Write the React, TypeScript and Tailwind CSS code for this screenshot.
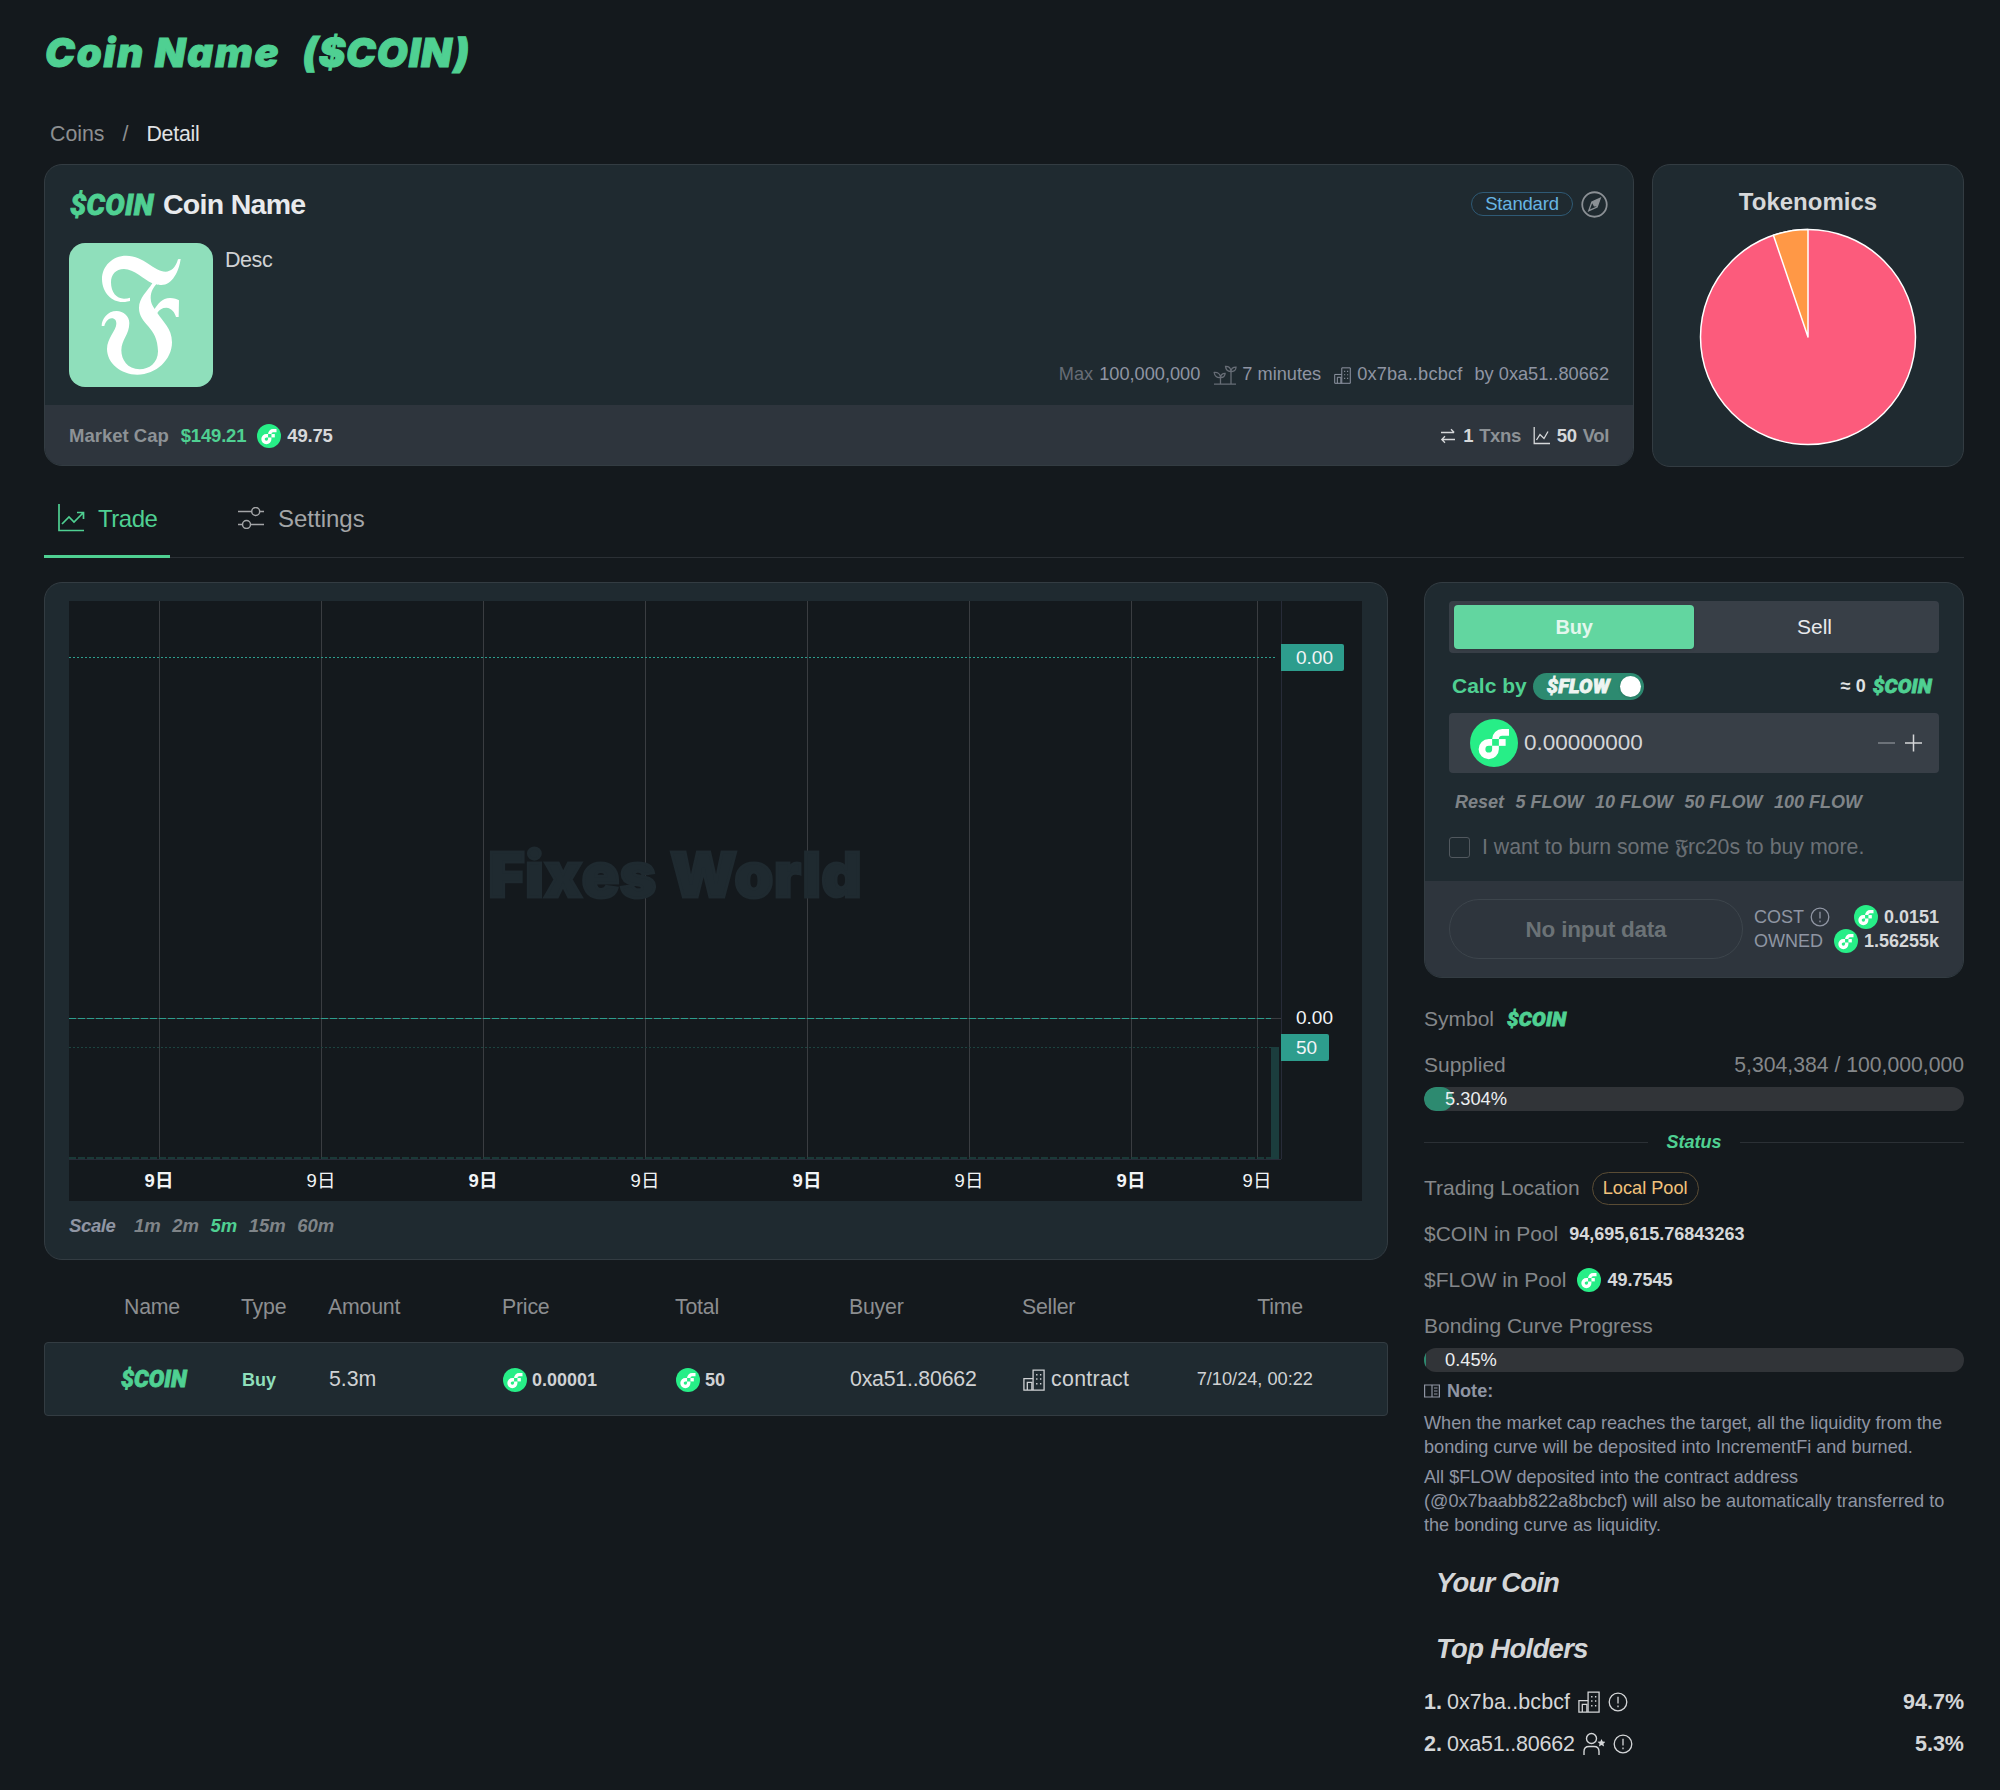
import React from "react";

const TITLE = "font-['Inter','Roboto',sans-serif] font-black italic [-webkit-text-stroke:1px_currentColor]";
const BRAND = "font-['Roboto','Inter',sans-serif] font-black italic [-webkit-text-stroke:0.8px_currentColor]";

function FlowIcon({ className = "size-6" }: { className?: string }) {
  return (
    <svg viewBox="0 0 101 101" className={`${className} shrink-0`}>
      <circle cx="50.5" cy="50.5" r="50.5" fill="#27ee87" />
      <g transform="translate(7 3) scale(.93)" fill="#fff">
        <rect x="57.8" y="42.2" width="15.3" height="15.3" />
        <path d="M42.55 65.1a7.64 7.64 0 1 1-7.64-7.65h7.64V42.2h-7.64A22.9 22.9 0 1 0 57.8 65.1v-7.65H42.55Z" />
        <path d="M65.45 34.55h15.28V19.27H65.45a22.93 22.93 0 0 0-22.9 22.9H57.8a7.64 7.64 0 0 1 7.65-7.62Z" />
      </g>
    </svg>
  );
}

function BuildingIcon({ className = "size-[22px]" }: { className?: string }) {
  return (
    <svg viewBox="0 0 24 24" className={`${className} shrink-0`} fill="none" stroke="currentColor" strokeWidth="1.4">
      <path d="M1 23V10.5H11V1.2H23V23Z" />
      <path d="M4.7 23v-8.5h5V23" />
      <path d="M11 10.5V23" />
      <path d="M14.3 6.2h1.5M18.5 6.2H20M14.3 11h1.5M18.5 11H20M14.3 16h1.5M18.5 16H20" strokeWidth="1.6" />
    </svg>
  );
}

function AlertIcon({ className = "size-5" }: { className?: string }) {
  return (
    <svg viewBox="0 0 20 20" className={`${className} shrink-0`} fill="none" stroke="currentColor" strokeWidth="1.3">
      <circle cx="10" cy="10" r="8.8" />
      <path d="M10 4.8v6.7M10 13.5v1.7" />
    </svg>
  );
}

function SproutIcon() {
  return (
    <svg viewBox="0 0 24 20" className="h-5 w-6 shrink-0" fill="none" stroke="currentColor" strokeWidth="1.3">
      <path d="M1 19.2h22M7.5 19v-6.5M18 19V7" />
      <path d="M7.5 12.5C4 13 1.5 11 1.2 7.5c3.5-.3 6 1.5 6.3 5ZM7.5 12.5c.2-2.6 1.8-4.2 4.6-4.2 0 2.8-1.6 4.4-4.6 4.2Z" />
      <path d="M18 6.5c-3.2.2-5.3-1.8-5.5-5.2 3.2-.2 5.4 1.7 5.5 5.2ZM18 6.5c.1-2.4 1.8-4.2 5-4.3 0 3-1.8 4.6-5 4.3Z" />
    </svg>
  );
}

function FrakturLogo() {
  return (
    <svg viewBox="0 0 432 432" className="size-36 shrink-0 rounded-2xl bg-[#8fdfbb]">
      <path
        fill="#fff"
        d="M335 48L327 49C320 75 305 86 290 86C255 86 225 38 172 38C130 38 99 70 99 108C99 150 130 177 160 177C172 177 180 175 183 174L183 164C178 166 172 167 165 167C142 167 126 148 126 118C126 95 140 78 165 78C195 78 225 110 250 121C235 145 210 165 210 195C210 245 267 250 267 325C267 360 240 379 212 379C175 379 157 350 157 322C157 290 181 275 181 240C181 220 163 204 143 204C115 204 98 228 98 249L106 249C108 240 116 226 128 226C138 226 142 233 142 242C142 262 114 285 114 318C114 360 155 395 205 395C262 395 309 350 309 298C309 255 280 235 265 210C270 200 280 194 292 194C308 194 318 210 321 222L329 222L330 172C325 168 315 165 303 165C280 165 265 185 257 198C250 188 245 180 245 165C245 145 255 132 262 124C268 126 272 126 277 126C310 126 330 85 335 48Z"
      />
    </svg>
  );
}

function HeaderCard() {
  return (
    <section className="flex h-[302px] w-[1590px] flex-col overflow-hidden rounded-[18px] border border-[#333c42] bg-[#1f2a30]">
      <div className="flex h-[240px] flex-col px-6 pt-[18px]">
        <div className="flex h-11 items-center">
          <span className={`${BRAND} w-[94px] pl-px pt-px text-[29px] tracking-[0.01em] text-[#4fd092]`}>$COIN</span>
          <h2 className="pb-px text-[28.5px] font-bold tracking-[-0.025em] text-[#e8eaed]">Coin Name</h2>
          <div className="mb-[3px] ml-auto mr-px flex items-center gap-2">
            <span className="flex h-6 w-[102px] items-center justify-center rounded-full border border-[#2f5a75] text-[18.5px] tracking-[-0.01em] text-[#68b5e3]">Standard</span>
            <svg viewBox="0 0 26 26" className="mt-px size-[27px] text-[#8b9095]" fill="none" stroke="currentColor" strokeWidth="1.7">
              <circle cx="13" cy="13" r="11.8" />
              <path d="M18.5 7l-3 8.500L7.500 19l3-8.500Z" strokeWidth="1.3" />
              <path d="M18.5 7l-8 3.500 5 5Z" fill="currentColor" stroke="none" />
              <path d="M10 10.500h3l2.500 4.500-3 0Z" fill="currentColor" stroke="none" />
            </svg>
          </div>
        </div>
        <div className="mt-[16px] flex gap-3">
          <FrakturLogo />
          <div className="flex flex-1 flex-col justify-between">
            <p className="pt-[1px] text-[21.5px] tracking-[-0.02em] text-[#d0d2d4]">Desc</p>
            <div className="flex h-6 items-center justify-end text-[18.2px] text-[#8f95a3]">
              <span className="text-[#676d76]">Max</span>
              <span className="ml-[6px] mr-[13px]">100,000,000</span>
              <span className="mr-[5px] text-[#676d76]"><SproutIcon /></span>
              <span className="mr-[13px]">7 minutes</span>
              <BuildingIcon className="mr-[6px] size-[17px]" />
              <span className="mr-3 tracking-[0.01em]">0x7ba..bcbcf</span>
              <span>by 0xa51..80662</span>
            </div>
          </div>
        </div>
      </div>
      <div className="flex flex-1 items-center bg-[#2e353d] px-6 pt-px text-[18.5px] font-bold text-[#d6d8da]">
        <span className="text-[#8d9296]">Market Cap</span>
        <span className="ml-3 tracking-[-0.01em] text-[#4fd092]">$149.21</span>
        <FlowIcon className="ml-[11px] size-6" />
        <span className="ml-[6px] tracking-[-0.01em]">49.75</span>
        <div className="ml-auto flex items-center tracking-[-0.02em]">
          <svg viewBox="0 0 16 16" className="mr-[7px] size-4" fill="none" stroke="currentColor" strokeWidth="1.3">
            <path d="M1 4.500h13M11 1.300l3.200 3.200M15 11.500H2M5 8.300l-3.200 3.200L5 14.700" />
          </svg>
          <span>1</span>
          <span className="ml-[6px] text-[#8d9296]">Txns</span>
          <svg viewBox="0 0 18 18" className="ml-3 mr-[6px] size-[18px]" fill="none" stroke="currentColor" strokeWidth="1.3">
            <path d="M1.200 0v16.500H17M3.500 13L7 7.500l4 4 4-7" />
          </svg>
          <span>50</span>
          <span className="ml-[6px] text-[#8d9296]">Vol</span>
        </div>
      </div>
    </section>
  );
}

function Tokenomics() {
  return (
    <section className="flex h-[303px] w-[312px] flex-col items-center rounded-[18px] border border-[#333c42] bg-[#1f2a30]">
      <h3 className="mt-[21px] text-2xl font-bold text-[#d6d8da]">Tokenomics</h3>
      <svg viewBox="-110 -110 220 220" className="mt-[9px] size-[220px]" stroke="#fff" strokeWidth="1.5" strokeLinejoin="round">
        <circle r="107.5" fill="#fc5b7c" />
        <path d="M0 0L-34.6 -101.8A107.5 107.5 0 0 1 0 -107.5Z" fill="#ff9846" />
      </svg>
    </section>
  );
}

const GRID = [90.5, 252.5, 414.5, 576.5, 738.5, 900.5, 1062.5, 1188.5];

function PriceChart() {
  return (
    <svg viewBox="0 0 1293 600" className="block h-[600px] w-[1293px] bg-[#14191d] font-['Liberation_Sans','Noto_Sans_CJK_SC',sans-serif]">
      {GRID.map((x) => (
        <path key={x} d={`M${x} 0V558`} stroke="#3a3d41" />
      ))}
      <text
        x="606"
        y="296"
        textAnchor="middle"
        fontSize="62"
        textLength="373"
        stroke="#1f2a30"
        strokeWidth="3"
        className="fill-[#1f2a30] font-['Inter','Roboto',sans-serif] font-black"
      >
        Fixes World
      </text>
      <path d="M0 56.5H1207" stroke="#2d9d8d" strokeDasharray="2 2" />
      <path d="M0 417.5H1212" stroke="#3a3d41" />
      <path d="M0 417.5H1202" stroke="#2d9d8d" strokeDasharray="7 2" />
      <path d="M0 446.5H1202" stroke="#1c4440" strokeDasharray="2 2" />
      <path d="M0 557H1202" stroke="#1c4440" strokeDasharray="7 2" strokeWidth="1.5" />
      <path d="M0 558.5H1212M1212.5 0V558" stroke="#272b38" />
      <rect x="1202" y="446" width="8" height="112" fill="#1b3d3d" />
      <path d="M1212 43h61q2 0 2 2v23q0 2-2 2h-61Z" fill="#2d9d8d" />
      <path d="M1212 433h46q2 0 2 2v23q0 2-2 2h-46Z" fill="#2d9d8d" />
      <g fill="#f2f4f6" fontSize="19">
        <text x="1227" y="63">0.00</text>
        <text x="1227" y="423">0.00</text>
        <text x="1227" y="453">50</text>
        {GRID.map((x, i) => (
          <text key={x} x={x - 0.5} y="586" textAnchor="middle" fontSize="18.5" fontWeight={i % 2 === 0 ? 700 : 400}>9日</text>
        ))}
      </g>
    </svg>
  );
}

function Trades() {
  const cols = "grid grid-cols-[121px_87px_174px_173px_174px_173px_1fr] items-center pl-[76px]";
  return (
    <div className="w-[1344px]">
      <div className={`${cols} h-[82px] pt-[14px] text-[21.3px] tracking-[-0.01em] text-[#8c8e90]`}>
        <span className="pl-[4px]">Name</span>
        <span>Type</span>
        <span>Amount</span>
        <span>Price</span>
        <span>Total</span>
        <span>Buyer</span>
        <span className="flex justify-between pr-[85px]">
          <span>Seller</span>
          <span>Time</span>
        </span>
      </div>
      <div className={`${cols} h-[74px] rounded border border-[#333c42] bg-[#1f2a30] pt-px text-[21.3px] text-[#d0d2d4]`}>
        <span className={`${BRAND} text-[23.2px] text-[#4fd092]`}>$COIN</span>
        <span className="text-lg font-bold text-[#8fdfbb]">Buy</span>
        <span>5.3m</span>
        <span className="flex items-center gap-[5px] text-lg font-bold"><FlowIcon />0.00001</span>
        <span className="flex items-center gap-[5px] text-lg font-bold"><FlowIcon />50</span>
        <span className="tracking-[-0.01em]">0xa51..80662</span>
        <span className="flex items-center justify-between pr-[74px]">
          <span className="flex items-center gap-[6px] tracking-[0.015em]"><BuildingIcon />contract</span>
          <span className="text-[18.2px]">7/10/24, 00:22</span>
        </span>
      </div>
    </div>
  );
}

function BuyPanel() {
  return (
    <section className="flex h-[396px] flex-col overflow-hidden rounded-[18px] border border-[#333c42] bg-[#1f2a30]">
      <div className="h-[298px] px-6 pt-[18px]">
        <div className="flex h-[52px] rounded bg-[#383f47] p-1 pl-[5px]">
          <div className="flex w-[240px] items-center justify-center rounded bg-[#62d6a0] text-xl font-bold tracking-[-0.01em] text-[#e3f7ed] shadow">Buy</div>
          <div className="flex flex-1 items-center justify-center text-[21px] text-[#e8eaed]">Sell</div>
        </div>
        <div className="mt-[19px] flex h-7 items-center pl-[3px] pr-[7px] text-[21px]">
          <span className="font-bold text-[#4fd092]">Calc by</span>
          <span className="ml-[6px] flex h-[27px] w-[111px] items-center justify-between rounded-full bg-[#2d8a70] pl-[14px] pr-[3px]">
            <span className={`${BRAND} text-xl tracking-[0.01em] text-[#eef5f2]`}>$FLOW</span>
            <span className="size-[21px] rounded-full bg-white shadow" />
          </span>
          <span className="ml-auto mr-[7px] text-lg font-bold text-[#e0e2e4]">≈ 0</span>
          <span className={`${BRAND} text-[20.5px] tracking-[0.01em] text-[#4fd092]`}>$COIN</span>
        </div>
        <div className="mt-[13px] flex h-[60px] items-center rounded bg-[#383f47] pl-[21px] pr-[17px] text-[22.5px] text-[#d4d6d8]">
          <FlowIcon className="mr-[6px] size-12" />
          <span>0.00000000</span>
          <svg viewBox="0 0 44 18" className="ml-auto h-[18px] w-11" fill="none" strokeWidth="1.5">
            <path d="M0 9h17" stroke="#7e848a" />
            <path d="M27 9h17M35.5 .5v17" stroke="#d4d6d8" />
          </svg>
        </div>
        <div className="mt-[15px] flex h-7 items-center gap-[11.5px] pl-[6px] text-lg font-bold italic text-[#7f8488]">
          <span>Reset</span>
          <span>5 FLOW</span>
          <span>10 FLOW</span>
          <span>50 FLOW</span>
          <span>100 FLOW</span>
        </div>
        <div className="mt-4 flex h-[30px] items-center text-[21.3px] text-[#6c7176]">
          <span className="mr-3 size-[21px] rounded-[3px] border border-[#51585e]" />
          <span>I want to burn some <span className="font-['DejaVu_Sans','DejaVu_Serif',serif] [-webkit-text-stroke:0.5px_currentColor]">𝔉</span>rc20s to buy more.</span>
        </div>
      </div>
      <div className="flex flex-1 items-center bg-[#2e353d] px-6">
        <div className="flex h-[60px] w-[294px] items-center justify-center rounded-full border border-[#3d454c] pt-px text-[22.5px] font-bold tracking-[-0.01em] text-[#6b7276]">No input data</div>
        <div className="ml-[11px] flex flex-1 flex-col text-lg text-[#8f95a3]">
          <div className="flex h-6 items-center justify-between">
            <span className="flex items-center gap-[6px]">COST <AlertIcon /></span>
            <span className="flex items-center gap-[6px] font-bold text-[#d6d8da]"><FlowIcon />0.0151</span>
          </div>
          <div className="flex h-6 items-center justify-between">
            <span>OWNED</span>
            <span className="flex items-center gap-[6px] font-bold text-[#d6d8da]"><FlowIcon />1.56255k</span>
          </div>
        </div>
      </div>
    </section>
  );
}

function Bar({ fill, label }: { fill: string; label: string }) {
  return (
    <div className="relative h-6 overflow-hidden rounded-full bg-[#313438]">
      <div className={`h-full bg-[#2d8a70] ${fill}`} />
      <span className="absolute inset-y-0 left-[21px] flex items-center text-[18.3px] text-[#eceef0]">{label}</span>
    </div>
  );
}

function Row({ children, className = "h-[46px]" }: { children: React.ReactNode; className?: string }) {
  return <div className={`flex items-center ${className}`}>{children}</div>;
}

function Stats() {
  return (
    <div className="mt-[18px] text-[21px] text-[#84878a]">
      <Row>
        <span>Symbol</span>
        <span className={`${BRAND} ml-[13px] text-[20.5px] tracking-[0.01em] text-[#4fd092]`}>$COIN</span>
      </Row>
      <Row className="h-[45px]">
        <span>Supplied</span>
        <span className="ml-auto text-[21.2px]">5,304,384 / 100,000,000</span>
      </Row>
      <Bar fill="w-[29px] rounded-full" label="5.304%" />
      <div className="mt-[17px] flex h-7 items-center">
        <span className="h-px w-[224px] bg-[#2b3035]" />
        <span className="flex-1 text-center text-lg font-bold italic text-[#4fd092]">Status</span>
        <span className="h-px w-[224px] bg-[#2b3035]" />
      </div>
      <div className="mt-[9px]">
        <Row>
          <span>Trading Location</span>
          <span className="ml-3 flex h-[33px] w-[107px] items-center justify-center rounded-full border border-[#5a4c34] pt-px text-[18.2px] text-[#f2c27b]">Local Pool</span>
        </Row>
        <Row>
          <span>$COIN in Pool</span>
          <span className="ml-[11px] text-lg font-bold text-[#d6d8da]">94,695,615.76843263</span>
        </Row>
        <Row>
          <span>$FLOW in Pool</span>
          <FlowIcon className="ml-[11px] mr-[6px] size-6" />
          <span className="text-lg font-bold text-[#d6d8da]">49.7545</span>
        </Row>
        <Row className="h-[45px]">
          <span>Bonding Curve Progress</span>
        </Row>
      </div>
      <Bar fill="w-[2px]" label="0.45%" />
      <div className="text-[18.1px] leading-6 text-[#8f95a3]">
        <div className="flex h-[38px] items-center gap-[7px] font-bold">
          <svg viewBox="0 0 16 14" className="h-3.5 w-4" fill="none" stroke="currentColor" strokeWidth="1.2">
            <path d="M.6 1h14.8v12H.6ZM8 1v12M10 4h3.5M10 7h3.5M10 10h3.5" />
          </svg>
          Note:
        </div>
        <p className="mt-px">When the market cap reaches the target, all the liquidity from the<br />bonding curve will be deposited into IncrementFi and burned.</p>
        <p className="mt-[6px]">All $FLOW deposited into the contract address<br />(@0x7baabb822a8bcbcf) will also be automatically transferred to<br />the bonding curve as liquidity.</p>
      </div>
    </div>
  );
}

function Holders() {
  return (
    <div className="text-[21.5px] text-[#d4d6d8]">
      <h3 className="mt-[13px] flex h-[66px] items-center pl-3 text-[27.5px] font-bold italic tracking-[-0.03em]">Your Coin</h3>
      <h3 className="flex h-[65px] items-center pl-3 text-[27.5px] font-bold italic tracking-[-0.025em]">Top Holders</h3>
      <div className="flex h-[42px] items-center">
        <b className="mr-[5px]">1.</b>
        <span className="tracking-[0.005em]">0x7ba..bcbcf</span>
        <BuildingIcon className="ml-2 size-[22px]" />
        <AlertIcon className="ml-2 size-5" />
        <b className="ml-auto">94.7%</b>
      </div>
      <div className="flex h-[42px] items-center">
        <b className="mr-[5px]">2.</b>
        <span className="tracking-[-0.01em]">0xa51..80662</span>
        <svg viewBox="0 0 22 24" className="ml-2 h-6 w-[22px]" fill="none" stroke="currentColor" strokeWidth="1.4">
          <circle cx="8.5" cy="6.5" r="5" />
          <path d="M1 23v-3.500q0-5 5-5h5q5 0 5 5V23" />
          <path d="M18.5 7l1.200 2.600 2.800.2-2.100 1.900.7 2.800-2.600-1.500-2.600 1.500.7-2.800-2.100-1.900 2.800-.2Z" fill="currentColor" stroke="none" />
        </svg>
        <AlertIcon className="ml-2 size-5" />
        <b className="ml-auto">5.3%</b>
      </div>
    </div>
  );
}

export default function App() {
  return (
    <main className="h-[1790px] w-[2000px] overflow-hidden bg-[#14191d] pl-11 pr-9 font-['Liberation_Sans','Noto_Sans_CJK_SC',sans-serif]">
      <header className="h-[164px]">
        <h1 className={`${TITLE} flex h-[105px] items-center gap-[22px] pl-px text-[40px] text-[#4fd092]`}>
          <span className="tracking-[0.045em]">Coin Name</span>
          <span className="tracking-[0.02em]">($COIN)</span>
        </h1>
        <nav className="flex h-[60px] items-center pl-[6px] text-[21.3px] text-[#8c8e90]">
          <span>Coins</span>
          <span className="mx-[18px]">/</span>
          <span className="tracking-[-0.01em] text-[#e0e2e4]">Detail</span>
        </nav>
      </header>
      <div className="flex h-[302px] justify-between">
        <HeaderCard />
        <Tokenomics />
      </div>
      <div className="flex h-[92px] items-stretch border-b border-[#2b3035] text-2xl text-[#a3a5a7]">
        <div className="-mb-px flex h-[92px] w-[126px] items-center border-b-[3px] border-[#4fd092] pb-px pl-[13px] pt-[18px] tracking-[-0.02em] text-[#4fd092]">
          <svg viewBox="0 0 28 28" className="mb-[2px] mr-[13px] size-7" fill="none" stroke="currentColor" strokeWidth="1.7">
            <path d="M2 0v26.500H27M5 20l7-7 5 5 9-9M20 8.500h6.500V15" />
          </svg>
          Trade
        </div>
        <div className="flex items-center pb-[3px] pl-[68px] pt-[18px]">
          <svg viewBox="0 0 26 22" className="mb-[2px] mr-[14px] h-[22px] w-[26px]" fill="none" stroke="currentColor" strokeWidth="1.5">
            <path d="M0 4.500h13.500M22 4.500h4M0 17.500h4M13 17.500h13" />
            <circle cx="17.7" cy="4.5" r="4" />
            <circle cx="8.5" cy="17.5" r="4" />
          </svg>
          Settings
        </div>
      </div>
      <div className="mt-6 flex justify-between">
        <div>
          <section className="h-[678px] w-[1344px] rounded-[18px] border border-[#333c42] bg-[#1f2a30] px-6 pt-[18px]">
            <PriceChart />
            <div className="flex h-[50px] items-center gap-[11.5px] text-[18.5px] font-bold italic text-[#7f8488]">
              <span className="mr-[7px] tracking-[-0.02em] text-[#8f95a3]">Scale</span>
              <span>1m</span>
              <span>2m</span>
              <span className="text-[#4fd092]">5m</span>
              <span>15m</span>
              <span>60m</span>
            </div>
          </section>
          <Trades />
        </div>
        <aside className="w-[540px]">
          <BuyPanel />
          <Stats />
          <Holders />
        </aside>
      </div>
    </main>
  );
}
